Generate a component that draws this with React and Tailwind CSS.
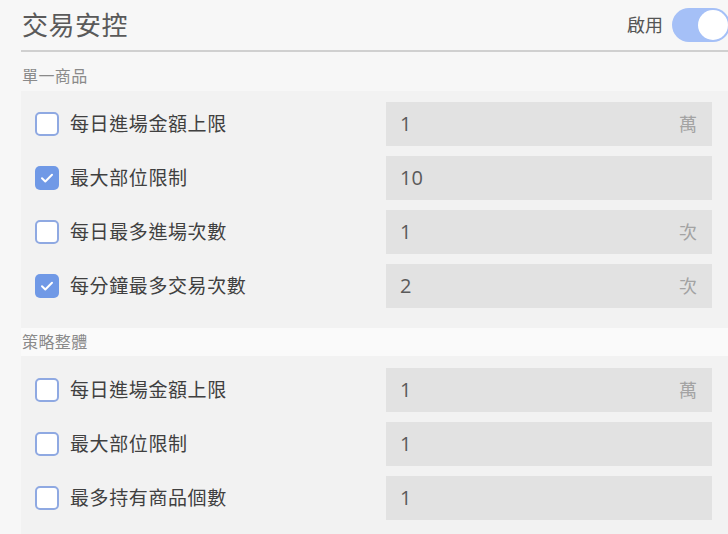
const FONT = '[font-family:"Open_Sans","Noto_Sans_CJK_TC",sans-serif]'

const single = [
  { label: '每日進場金額上限', value: '1', unit: '萬', checked: false },
  { label: '最大部位限制', value: '10', unit: '', checked: true },
  { label: '每日最多進場次數', value: '1', unit: '次', checked: false },
  { label: '每分鐘最多交易次數', value: '2', unit: '次', checked: true },
]

const overall = [
  { label: '每日進場金額上限', value: '1', unit: '萬', checked: false },
  { label: '最大部位限制', value: '1', unit: '', checked: false },
  { label: '最多持有商品個數', value: '1', unit: '', checked: false },
]

function Checkbox({ checked }) {
  if (checked) {
    return (
      <span className="flex h-[24px] w-[24px] shrink-0 items-center justify-center rounded-[5px] bg-[#7099e6]">
        <svg width="16" height="16" viewBox="0 0 16 16" fill="none">
          <path d="M3 8.3l3.3 3.2L13 4.8" stroke="#fff" strokeWidth="2" strokeLinecap="round" strokeLinejoin="round" />
        </svg>
      </span>
    )
  }
  return <span className="h-[24px] w-[24px] shrink-0 rounded-[5px] border-2 border-[#8fa9e2] bg-white" />
}

function Row({ label, value, unit, checked }) {
  return (
    <div className="flex h-[44px] items-center">
      <div className="flex flex-1 items-center gap-[11px]">
        <Checkbox checked={checked} />
        <span className="text-[19px] leading-none tracking-[0.6px] text-[#404040]">{label}</span>
      </div>
      <div className="flex h-[44px] w-[326px] items-center justify-between bg-[#e2e2e2] pl-[14px] pr-[15px]">
        <span className="text-[20px] leading-none text-[#5a5a5a]">{value}</span>
        <span className="text-[18px] leading-none text-[#a3a3a3]">{unit}</span>
      </div>
    </div>
  )
}

function Panel({ rows, top }) {
  return (
    <div className={`flex flex-col gap-[10px] bg-[#f2f2f2] pl-[14px] pr-[18px] ${top} pb-[20px]`}>
      {rows.map(r => <Row key={r.label} {...r} />)}
    </div>
  )
}

export default function App() {
  return (
    <div className={`h-[534px] w-[728px] overflow-hidden bg-[#f7f7f7] ${FONT}`}>
      <div className="w-[730px] pl-[21px]">
        <div className="flex h-[50px] items-center justify-between">
          <h1 className="pl-[1px] text-[26px] font-normal leading-none tracking-[0.5px] text-[#5a5a5a]">交易安控</h1>
          <div className="flex items-center gap-[9px]">
            <span className="text-[18px] leading-none text-[#555]">啟用</span>
            <span className="flex h-[34px] w-[58px] items-center justify-end rounded-full bg-[#a5c0f7] pr-[2px]">
              <span className="h-[30px] w-[30px] rounded-full bg-white" />
            </span>
          </div>
        </div>
        <div className="h-[2px] bg-[#d0d0d0]" />
        <div className="flex h-[39px] items-center pl-[1px] pt-[8px] text-[16px] tracking-[0.4px] text-[#8a8a8a]">單一商品</div>
        <Panel rows={single} top="pt-[11px]" />
        <div className="flex h-[28px] items-center bg-[#fafafa] pl-[1px] text-[16px] tracking-[0.4px] text-[#8a8a8a]">策略整體</div>
        <Panel rows={overall} top="pt-[12px]" />
      </div>
    </div>
  )
}
